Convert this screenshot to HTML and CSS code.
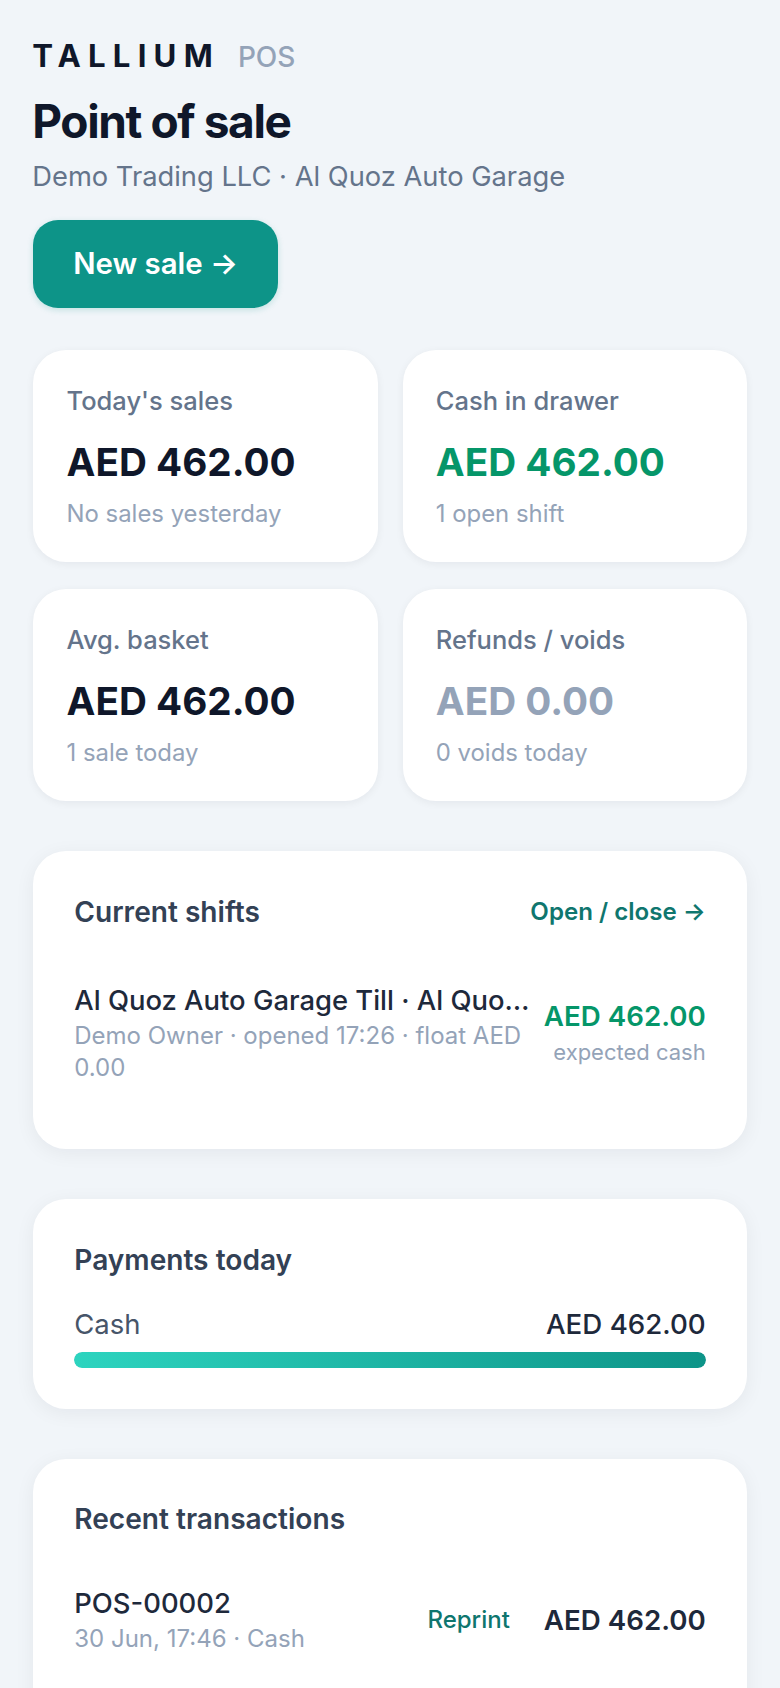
FILE: index.html
```html
<!DOCTYPE html>
<html lang="en">
<head>
    <meta charset="UTF-8">
    <meta name="viewport" content="width=device-width, initial-scale=1.0">
    <title>Point of sale - Tallium POS</title>
    <link rel="stylesheet" href="styles.css">
</head>
<body>

    <div class="page">
        <!-- Header -->
        <div class="header">
            <div class="brand">
                <span class="brand-name">TALLIUM</span>
                <span class="brand-tag">POS</span>
            </div>
            <h1>Point of sale</h1>
            <p class="subtitle">Demo Trading LLC · Al Quoz Auto Garage</p>
        </div>
        <a class="btn" href="#">New sale →</a>

        <!-- Stats -->
        <div class="stats">
            <div class="stat">
                <div class="stat-label">Today's sales</div>
                <div class="stat-value">AED 462.00</div>
                <div class="stat-note">No sales yesterday</div>
            </div>
            <div class="stat">
                <div class="stat-label">Cash in drawer</div>
                <div class="stat-value green">AED 462.00</div>
                <div class="stat-note">1 open shift</div>
            </div>
            <div class="stat">
                <div class="stat-label">Avg. basket</div>
                <div class="stat-value">AED 462.00</div>
                <div class="stat-note">1 sale today</div>
            </div>
            <div class="stat">
                <div class="stat-label">Refunds / voids</div>
                <div class="stat-value muted">AED 0.00</div>
                <div class="stat-note">0 voids today</div>
            </div>
        </div>

        <!-- Current shifts -->
        <div class="card shifts">
            <div class="card-head">
                <h2>Current shifts</h2>
                <a class="card-link" href="#">Open / close →</a>
            </div>
            <div class="row">
                <div class="row-main">
                    <div class="row-title nowrap">Al Quoz Auto Garage Till · Al Quo…</div>
                    <div class="row-sub">Demo Owner · opened 17:26 · float AED 0.00</div>
                </div>
                <div class="row-side">
                    <div class="row-amount green">AED 462.00</div>
                    <div class="side-note">expected cash</div>
                </div>
            </div>
        </div>

        <!-- Payments -->
        <div class="card">
            <h2>Payments today</h2>
            <div class="pay-line">
                <span class="pay-name">Cash</span>
                <span class="pay-amount">AED 462.00</span>
            </div>
            <div class="bar"><div class="bar-fill" style="width: 100%"></div></div>
        </div>

        <!-- Transactions -->
        <div class="card recent">
            <h2>Recent transactions</h2>
            <div class="row tx">
                <div class="row-main">
                    <div class="row-title">POS-00002</div>
                    <div class="row-sub">30 Jun, 17:46 · Cash</div>
                </div>
                <a class="reprint" href="#">Reprint</a>
                <div class="row-amount">AED 462.00</div>
            </div>
        </div>
    </div>

</body>
</html>
```

FILE: styles.css
```css
* {
    box-sizing: border-box;
}
html, body {
    margin: 0;
    padding: 0;
    height: 1688px;
    overflow: hidden;
}
body {
    font-family: Inter, "Liberation Sans", sans-serif;
    background-color: #f1f5f9;
    color: #0f172a;
}
a {
    text-decoration: none;
}
.page {
    padding: 35.5px 33.28px 0;
}
.header {
    margin-left: -1px;
}
.green {
    color: #059669;
}
.muted {
    color: #94a3b8;
}
.brand {
    display: flex;
    align-items: baseline;
    gap: 18px;
    line-height: 40px;
}
.brand-name {
    font-size: 31.2px;
    font-weight: 700;
    letter-spacing: 7.2px;
}
.brand-tag {
    font-size: 28px;
    font-weight: 500;
    color: #94a3b8;
}
h1 {
    margin: 16px 0 0;
    font-size: 46px;
    line-height: 56px;
    font-weight: 700;
    letter-spacing: -0.03em;
}
.subtitle {
    margin: 10px 0 0;
    font-size: 27.3px;
    line-height: 36px;
    color: #64748b;
}
.btn {
    display: inline-block;
    margin-top: 25.5px;
    padding: 0 40px;
    font-size: 29.4px;
    font-weight: 600;
    line-height: 88px;
    color: white;
    background: #0d9488;
    border-radius: 25px;
    box-shadow: 0 2px 6px rgba(13, 148, 136, 0.2);
}
.stats {
    display: grid;
    grid-template-columns: 1fr 1fr;
    gap: 27px 25px;
    margin-top: 42px;
}
.stat {
    padding: 36px 33.28px 33.5px;
    background: white;
    border-radius: 33px;
    box-shadow: 0 2px 8px rgba(15, 23, 42, 0.06);
}
.stat-label {
    font-size: 25.5px;
    line-height: 30px;
    font-weight: 500;
    color: #64748b;
}
.stat-value {
    margin-top: 20.5px;
    font-size: 38.7px;
    line-height: 50px;
    font-weight: 700;
}
.stat-note {
    margin-top: 12px;
    font-size: 23.9px;
    line-height: 30px;
    color: #94a3b8;
}
.card {
    margin-top: 50px;
    padding: 42.5px 41px 41px;
    background: white;
    border-radius: 33px;
    box-shadow: 0 4px 20px rgba(15, 23, 42, 0.06);
}
.shifts {
    height: 298px;
}
.card-head {
    display: flex;
    align-items: center;
    justify-content: space-between;
}
h2 {
    margin: 0;
    font-size: 28.1px;
    line-height: 36px;
    font-weight: 600;
    color: #334155;
}
.card-link {
    font-size: 24.1px;
    font-weight: 600;
    color: #0f766e;
}
.row {
    display: flex;
    align-items: center;
    gap: 14px;
    margin-top: 52.5px;
}
.tx {
    margin-top: 47.5px;
}
.row-main {
    flex: 1;
    min-width: 0;
}
.row-title {
    font-size: 27.4px;
    line-height: 37px;
    font-weight: 500;
    color: #1e293b;
}
.nowrap {
    white-space: nowrap;
}
.row-sub {
    margin-top: 1px;
    font-size: 24px;
    line-height: 32px;
    color: #94a3b8;
}
.row-side {
    flex-shrink: 0;
    text-align: right;
}
.row-amount {
    font-size: 27.7px;
    line-height: 36px;
    font-weight: 600;
    flex-shrink: 0;
}
.side-note {
    margin-top: 2px;
    font-size: 22px;
    line-height: 32px;
    color: #94a3b8;
}
.tx .row-amount {
    color: #1e293b;
}
.reprint {
    margin-right: 20px;
    font-size: 24px;
    font-weight: 500;
    color: #0f766e;
}
.pay-line {
    display: flex;
    justify-content: space-between;
    align-items: center;
    margin-top: 28px;
    font-size: 27.5px;
    line-height: 36px;
}
.pay-name {
    color: #475569;
}
.pay-amount {
    font-size: 27.7px;
    font-weight: 500;
    color: #1e293b;
}
.bar {
    height: 16px;
    margin-top: 10px;
    background: #e2e8f0;
    border-radius: 8px;
    overflow: hidden;
}
.bar-fill {
    height: 100%;
    background: linear-gradient(90deg, #2dd4bf, #0d9488);
    border-radius: 8px;
}
.recent {
    height: 400px;
}
```
